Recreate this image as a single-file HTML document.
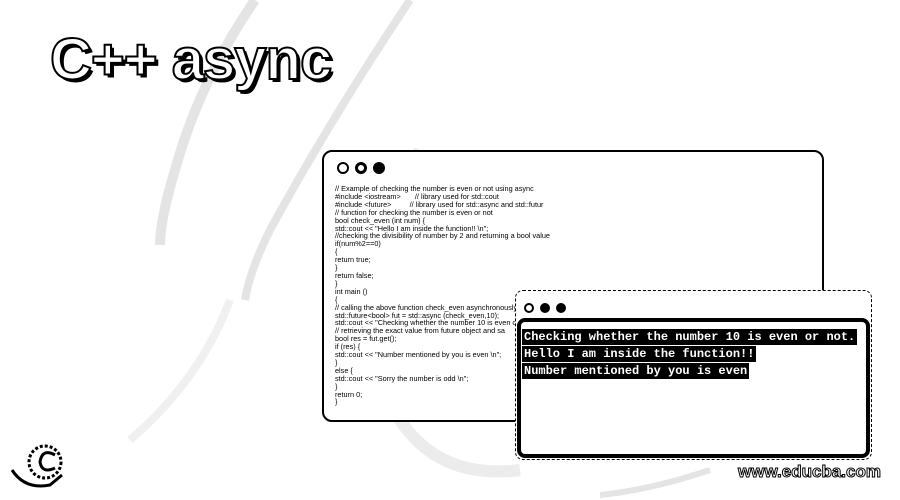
<!DOCTYPE html>
<html><head><style>
body{margin:0;width:900px;height:500px;background:#fff;position:relative;overflow:hidden;font-family:"Liberation Sans",sans-serif}
.title{position:absolute;left:50px;top:26px;font:bold 58px "Liberation Sans",sans-serif;color:#fff;-webkit-text-stroke:2px #000;text-shadow:3px 3px 0 #000;letter-spacing:-1px}
.win{position:absolute;left:322px;top:150px;width:498px;height:268px;border:2px solid #000;border-radius:10px;background:#fff}
.code{position:absolute;left:335px;top:185px;font:7.3px/7.9px "Liberation Sans",sans-serif;color:#000;white-space:pre}
.dots span{display:inline-block;border-radius:50%;border:3px solid #000;width:6px;height:6px;margin-right:6px}
.term{position:absolute;left:517px;top:318px;width:345px;height:132px;border:4px solid #000;border-radius:8px;background:#fff}
.tline{position:absolute;left:522px;font:bold 12px "Liberation Mono",monospace;color:#fff;background:#000;padding:1px 2px;white-space:pre}
.url{position:absolute;left:738px;top:462px;font:bold 17px "Liberation Sans",sans-serif;color:#fff;-webkit-text-stroke:1px #000}
</style></head><body>
<svg width="900" height="500" style="position:absolute;left:0;top:0">
<path d="M255 0 Q200 80 175 170 Q160 220 160 245" stroke="#e4e4e4" stroke-width="10" fill="none"/>
<path d="M410 0 Q330 120 270 230 Q250 270 245 300" stroke="#e4e4e4" stroke-width="8" fill="none"/>
<path d="M420 150 Q350 300 400 420 Q440 480 520 470" stroke="#ececec" stroke-width="12" fill="none"/>
<path d="M130 440 Q200 380 230 300" stroke="#f0f0f0" stroke-width="8" fill="none"/>
<path d="M710 470 Q650 490 600 495" stroke="#e4e4e4" stroke-width="6" fill="none"/>
<path d="M12 470 Q25 490 50 485 L62 475" stroke="#000" stroke-width="3" fill="none"/>
<circle cx="45" cy="462" r="16" stroke="#000" stroke-width="3" fill="#fff" stroke-dasharray="3 2"/>
<path d="M55 455 Q42 448 40 462 Q42 474 55 468" stroke="#000" stroke-width="3" fill="none"/>
<line x1="450" y1="390" x2="485" y2="415" stroke="#000" stroke-width="1.5"/>
<line x1="440" y1="374" x2="510" y2="373" stroke="#000" stroke-width="1.5"/>
</svg>
<div class="title">C++ async</div>
<div class="win"></div>
<div style="position:absolute;left:337px;top:161px" class="dots"><span style="border-width:2px;width:8px;height:8px"></span><span></span><span style="background:#000"></span></div>
<div class="code">// Example of checking the number is even or not using async
#include &lt;iostream&gt;       // library used for std::cout
#include &lt;future&gt;         // library used for std::async and std::futur
// function for checking the number is even or not
bool check_even (int num) {
std::cout &lt;&lt; "Hello I am inside the function!! \n";
//checking the divisibility of number by 2 and returning a bool value
if(num%2==0)
{
return true;
}
return false;
}
int main ()
{
// calling the above function check_even asynchronously
std::future&lt;bool&gt; fut = std::async (check_even,10);
std::cout &lt;&lt; "Checking whether the number 10 is even or
// retrieving the exact value from future object and sa
bool res = fut.get();
if (res) {
std::cout &lt;&lt; "Number mentioned by you is even \n";
}
else {
std::cout &lt;&lt; "Sorry the number is odd \n";
}
return 0;
}</div>
<div style="position:absolute;left:515px;top:290px;width:355px;height:168px;border:1px dashed #000;border-radius:8px;background:#fff"></div>
<div style="position:absolute;left:524px;top:300px" class="dots"><span style="border-width:2px;width:6px;height:6px"></span><span style="background:#000;border-width:2px;width:6px;height:6px"></span><span style="background:#000;border-width:2px;width:6px;height:6px"></span></div>
<div class="term"></div>
<div class="tline" style="top:329px">Checking whether the number 10 is even or not.</div>
<div class="tline" style="top:346px">Hello I am inside the function!!</div>
<div class="tline" style="top:363px">Number mentioned by you is even</div>
<div class="url">www.educba.com</div>
</body></html>
